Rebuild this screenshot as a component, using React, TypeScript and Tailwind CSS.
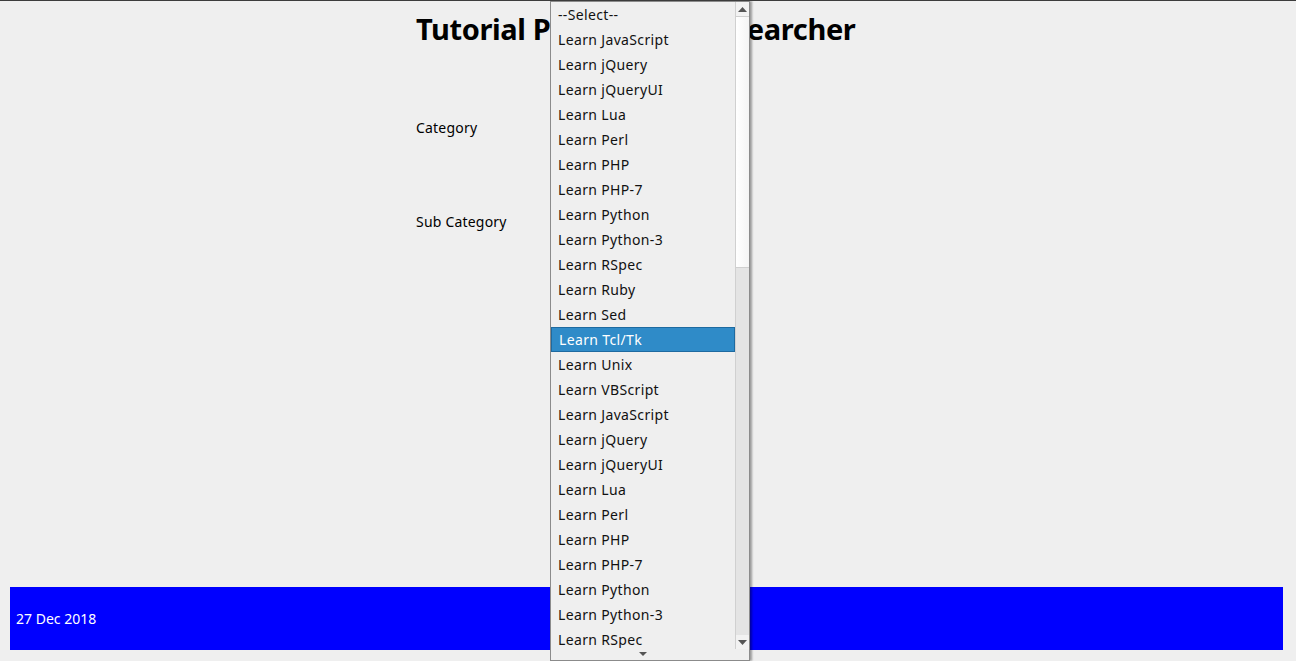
const options = [
  "Learn JavaScript",
  "Learn jQuery",
  "Learn jQueryUI",
  "Learn Lua",
  "Learn Perl",
  "Learn PHP",
  "Learn PHP-7",
  "Learn Python",
  "Learn Python-3",
  "Learn RSpec",
  "Learn Ruby",
  "Learn Sed",
  "Learn Tcl/Tk",
  "Learn Unix",
  "Learn VBScript",
];

const items = ["--Select--", ...options, ...options.slice(0, 10)];

function Dropdown() {
  return (
    <div className="absolute left-[550px] top-0 w-[200px] h-[660px] border border-[#8b8b8b] bg-[#efefef] shadow-[2px_0_2px_rgba(0,0,0,0.35)] flex">
      <div className="flex-1 flex flex-col">
        <ul className="flex-1 overflow-hidden tracking-[0.35px]">
          {items.map((item, i) => (
            <li
              key={i}
              className={
                item === "Learn Tcl/Tk"
                  ? "h-[25px] pl-[7px] flex items-center bg-[#2f8bc8] border border-[#1e6aa0] text-white"
                  : "h-[25px] pl-[7px] flex items-center text-[#111]"
              }
            >
              {item}
            </li>
          ))}
        </ul>
        <div className="h-[12px] flex justify-center items-center">
          <svg width="8" height="5" viewBox="0 0 8 5">
            <path d="M0 0h8L4 4z" fill="#555" />
          </svg>
        </div>
      </div>
      <div className="w-[14px] h-[647px] flex flex-col border-l border-[#d0d0d0] bg-[#e4e4e4]">
        <div className="h-[14px] flex justify-center items-center bg-[#f2f2f2]">
          <svg width="9" height="5" viewBox="0 0 9 5">
            <path d="M0 5h9L4.5 0z" fill="#555" />
          </svg>
        </div>
        <div className="h-[252px] bg-gradient-to-r from-white to-[#f4f4f4] border-y border-[#cfcfcf]" />
        <div className="flex-1" />
        <div className="h-[14px] flex justify-center items-center bg-[#f2f2f2]">
          <svg width="9" height="5" viewBox="0 0 9 5">
            <path d="M0 0h9L4.5 5z" fill="#555" />
          </svg>
        </div>
      </div>
    </div>
  );
}

export default function App() {
  return (
    <div className="relative h-[661px] bg-[#efefef] border-t border-[#3c3c3c] font-['Noto_Sans','DejaVu_Sans',sans-serif] text-[14px] text-black overflow-hidden">
      <div className="h-[586px] pl-[416px] flex flex-col tracking-[0.2px]">
        <h1 className="mt-[8px] h-[40px] text-[29px] font-bold leading-[40px] tracking-[-0.36px] whitespace-nowrap">
          Tutorial Point Tutorial Searcher
        </h1>
        <div className="mt-[67px] h-[22px] flex items-center">
          <label>Category</label>
        </div>
        <div className="mt-[72px] h-[22px] flex items-center">
          <label>Sub Category</label>
        </div>
      </div>
      <footer className="ml-[10px] mr-[13px] h-[63px] bg-[#0000ff] text-white flex items-center px-[6px]">
        27 Dec 2018
      </footer>
      <Dropdown />
    </div>
  );
}
